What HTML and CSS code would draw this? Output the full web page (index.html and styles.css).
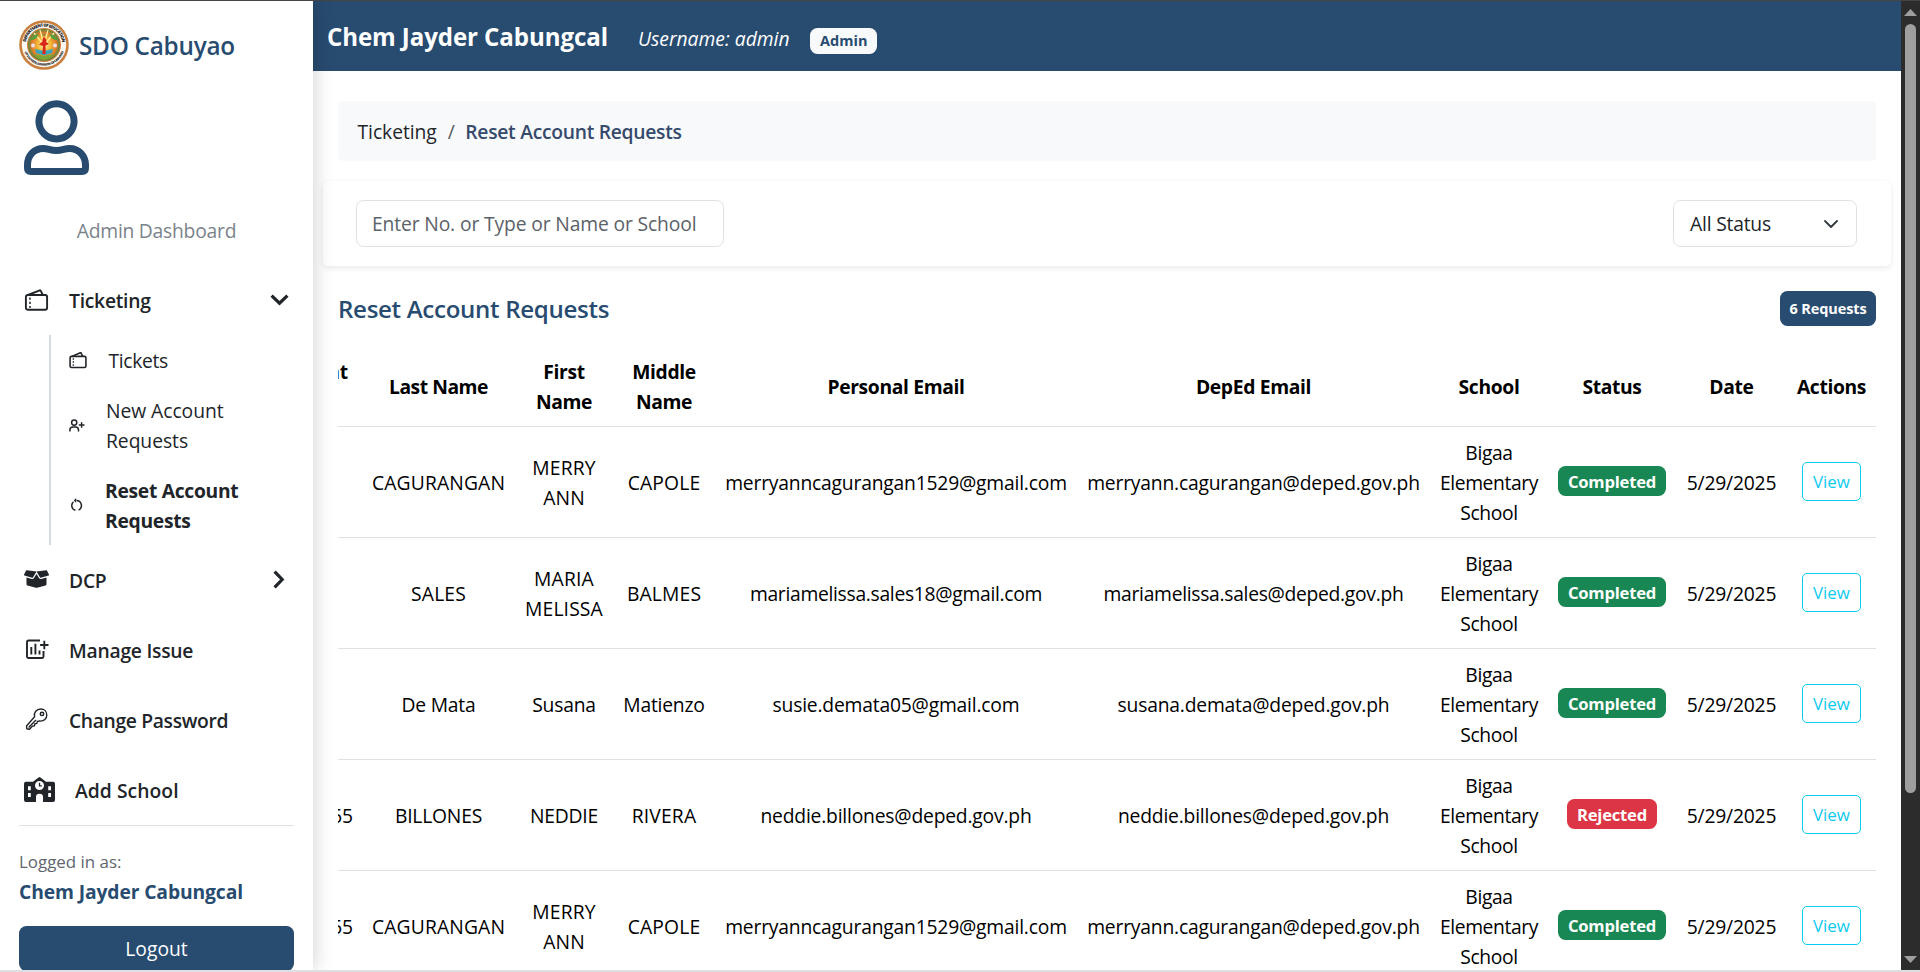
FILE: index.html
```html
<!DOCTYPE html>
<html lang="en">
<head>
<meta charset="utf-8">
<title>SDO Cabuyao</title>
<link rel="stylesheet" href="styles.css">
</head>
<body>
<div class="app">
  <aside class="sidebar">
    <div class="brand">
      <svg class="logo" width="50" height="50" viewBox="0 0 50 50">
        <defs>
          <radialGradient id="glow"><stop offset="0" stop-color="#fff3a0"/><stop offset=".45" stop-color="#f3b334"/><stop offset=".8" stop-color="#e07a2c"/><stop offset="1" stop-color="#4c8a3c"/></radialGradient>
          <path id="arcTop" d="M6.600 25a18.400 18.400 0 0 1 36.800 0"/>
          <path id="arcBottom" d="M4.300 25a20.700 20.700 0 0 0 41.400 0"/>
        </defs>
        <circle cx="25" cy="25" r="24.800" fill="#c9803f"/>
        <circle cx="25" cy="25" r="22.200" fill="#fbf8f2"/>
        <text class="seal"><textPath href="#arcTop" startOffset="3" textLength="52">DEPARTMENT OF EDUCATION</textPath></text>
        <text class="seal seal-small"><textPath href="#arcBottom" startOffset="7" textLength="51">CITY SCHOOLS DIVISION OF CABUYAO</textPath></text>
        <circle cx="25" cy="25" r="17" fill="#c9803f"/>
        <circle cx="25" cy="25" r="15.800" fill="url(#glow)"/>
        <path d="M25 25 15 13M25 25 21 10M25 25 29 10M25 25 35 13" stroke="#fff2a8" stroke-width="1.200"/>
        <path d="M11.500 20c2-4 5-6 8-6-1 4-4 6-8 6zm27 0c-2-4-5-6-8-6 1 4 4 6 8 6z" fill="#55a03c"/>
        <circle cx="14" cy="25.500" r="2" fill="#e8e0f0"/><circle cx="36" cy="25.500" r="2" fill="#e8e0f0"/>
        <path d="M16 29l9 2 9-2-1 4-8 2.500-8-2.500z" fill="#35a8bd"/>
        <path d="M15 34l10 2 10-2-4 4-6 2-6-2z" fill="#7aa832"/>
        <path d="M25 17c2.500 2 3 3.500 2 5l3 2-3.500 1.500 .2 8.500h-3.400L24 26l-4-1.500 3.500-3c-.5-2 .5-3 1.500-4.500z" fill="#d8281c"/>
        <circle cx="25" cy="14.500" r="1.600" fill="#9a8a4a"/>
      </svg>
      <span class="brand-name">SDO Cabuyao</span>
    </div>
    <svg class="avatar" width="66" height="76" viewBox="0 0 66 76" fill="none" stroke="#284b70" stroke-width="7">
      <circle cx="32.500" cy="21.300" r="17.600"/>
      <path d="M7 71.500h51q3.500 0 3.500-3.500v-3c0-9.500-7-16.500-16-16.500-5 0-7 2-13.200 2s-8.200-2-13.200-2c-9 0-15.600 7-15.600 16.500v3q0 3.500 3.500 3.500z"/>
    </svg>
    <p class="role">Admin Dashboard</p>

    <nav class="nav">
      <div class="nav-item">
        <svg class="ticket" width="25" height="22" viewBox="0 0 25 22" fill="none" stroke="#212529" stroke-width="1.900" stroke-linejoin="round"><rect x="1.900" y="6" width="21.200" height="14.700" rx="2"/><path d="M4 6 15.700 1.300q.8-.3 1.100.5L18.800 6"/><path d="M6 8.500v11" stroke-dasharray="2.200 2" stroke-width="1.500"/></svg>
        <span>Ticketing</span>
        <svg class="caret caret-down" width="19" height="12" viewBox="0 0 19 12" fill="none" stroke="#212529" stroke-width="3.200"><path d="M1.600 1.600 9.500 9.200l7.900-7.600"/></svg>
      </div>
      <div class="subnav">
        <div class="subnav-item">
          <svg width="18" height="18" viewBox="0 0 25 24" fill="none" stroke="#212529" stroke-width="2.200" stroke-linejoin="round"><rect x="1.500" y="7" width="22" height="15.500" rx="2"/><path d="M4 7 15.700 2q.8-.3 1.100.5L19 7"/><path d="M6 9.500v12" stroke-dasharray="2.200 2" stroke-width="1.800"/></svg>
          <span class="tight">Tickets</span>
        </div>
        <div class="subnav-item two-line">
          <svg width="16" height="13" viewBox="0 0 16 13" fill="none" stroke="#212529" stroke-width="1.500"><circle cx="5.200" cy="3.600" r="2.600"/><path d="M.9 12.500V11q0-3 3-3h2.600q3 0 3 3v1.500M12.600 3.200v5.600M9.800 6h5.700"/></svg>
          <span>New Account<br>Requests</span>
        </div>
        <div class="subnav-item two-line active">
          <svg width="15" height="14" viewBox="0 0 15 14" fill="none" stroke="#212529" stroke-width="1.500"><path d="M7.600 2.600A5 5 0 0 1 9.600 12.100M6.400 12.300A5 5 0 0 1 4.500 3.700"/><path d="M7.200 0 4.800 2.400l2.400 2.400z" fill="#212529" stroke="none"/></svg>
          <span>Reset Account<br>Requests</span>
        </div>
      </div>
      <div class="nav-item">
        <svg width="25" height="20" viewBox="0 0 640 512" fill="#212529"><path d="M425.700 256c-16.900 0-32.800-9-41.400-23.400L320 126l-64.200 106.600c-8.700 14.500-24.600 23.500-41.500 23.500-4.500 0-9-.6-13.300-1.900L64 215v178c0 14.700 10 27.500 24.200 31l216.200 54.100c10.200 2.500 20.900 2.500 31 0L551.800 424c14.200-3.600 24.200-16.400 24.200-31V215l-137 39.100c-4.300 1.300-8.800 1.900-13.300 1.900zm212.600-112.200L586.800 41c-3.100-6.200-9.800-9.800-16.700-8.900L320 64l91.700 152.100c3.800 6.300 11.400 9.300 18.500 7.300l197.900-56.500c9.900-2.900 14.700-13.900 10.200-23.100zM53.200 41 1.700 143.800c-4.600 9.200.3 20.200 10.100 23l197.900 56.500c7.100 2 14.700-1 18.500-7.300L320 64 69.800 32.100c-6.900-.8-13.500 2.700-16.600 8.900z"/></svg>
        <span>DCP</span>
        <svg class="caret caret-right" width="12" height="19" viewBox="0 0 12 19" fill="none" stroke="#212529" stroke-width="3.200"><path d="M1.600 1.600 9.200 9.500l-7.600 7.900"/></svg>
      </div>
      <div class="nav-item">
        <svg width="25" height="22" viewBox="0 0 25 22" fill="none" stroke="#212529" stroke-width="1.900"><path d="M16 2.500H4.500Q3 2.500 3 4v14.500Q3 20 4.500 20H18q1.500 0 1.500-1.500V13"/><path d="M20.300 2.800v8.400M16.100 7h8.400M7.300 9v7.500M11.400 5.800v10.700M15.500 12.500v4"/></svg>
        <span>Manage Issue</span>
      </div>
      <div class="nav-item">
        <svg width="25" height="24" viewBox="0 0 25 24" fill="none" stroke="#212529" stroke-width="1.400" stroke-linejoin="round"><path d="M10.600 9.800C9.600 5.500 12.500 2 16.800 2c3.500 0 6 2.500 6 6s-2.800 6.600-7.200 6l-2.200.4-.5 2-2 .3-.4 2.100-2 .3-3 3.200-2.700-.6-.3-2.700z"/><path d="M4.600 20.500 12 13"/><circle cx="18" cy="6.900" r="1.700" stroke-width="1.500"/></svg>
        <span class="password">Change Password</span>
      </div>
      <div class="nav-item">
        <svg width="31" height="25" viewBox="0 0 31 25"><path fill="#212529" fill-rule="evenodd" d="M15.500 0q.5 0 1 .4L22 4.700h7q2 0 2 2V23q0 2-2 2H19v-5.200q0-3-3.500-3t-3.500 3V25H2q-2 0-2-2V6.700q0-2 2-2h7L14.500.4q.5-.4 1-.4zM4 9.300v4h2.800v-4zm0 6.700v4h2.800v-4zM24.200 9.300v4H27v-4zm0 6.700v4H27v-4zM15.500 4a4.500 4.500 0 1 0 0 9 4.500 4.500 0 0 0 0-9z"/><path d="M15.500 5.800v3h2.300" fill="none" stroke="#212529" stroke-width="1.300"/></svg>
        <span class="wide">Add School</span>
      </div>
    </nav>

    <div class="account">
      <div class="account-label">Logged in as:</div>
      <div class="account-name">Chem Jayder Cabungcal</div>
      <button class="logout">Logout</button>
    </div>
  </aside>

  <main class="main">
    <header class="topbar">
      <span class="topbar-name">Chem Jayder Cabungcal</span>
      <span class="topbar-user">Username: admin</span>
      <span class="topbar-role">Admin</span>
    </header>
    <div class="content">
      <div class="breadcrumb"><span>Ticketing</span><span class="slash">/</span><span class="current">Reset Account Requests</span></div>
      <div class="filters">
        <input class="search" type="text" placeholder="Enter No. or Type or Name or School">
        <div class="select"><span>All Status</span>
          <svg width="14" height="8" viewBox="0 0 14 8" fill="none" stroke="#343a40" stroke-width="1.800" stroke-linecap="round" stroke-linejoin="round"><path d="M1 1l6 6 6-6"/></svg>
        </div>
      </div>
      <div class="list-head">
        <h1 class="title">Reset Account Requests</h1>
        <span class="count">6 Requests</span>
      </div>
      <div class="table-scroll">
        <table class="table">
          <colgroup><col class="c-acc"><col class="c-last"><col class="c-first"><col class="c-mid"><col class="c-mail"><col class="c-deped"><col class="c-school"><col class="c-status"><col class="c-date"><col class="c-act"></colgroup>
          <thead>
            <tr><th>Account<br>No.</th><th class="snug">Last Name</th><th>First Name</th><th>Middle Name</th><th>Personal Email</th><th>DepEd Email</th><th>School</th><th>Status</th><th>Date</th><th>Actions</th></tr>
          </thead>
          <tbody>
            <tr><td></td><td class="caps">CAGURANGAN</td><td class="caps">MERRY ANN</td><td class="caps">CAPOLE</td><td>merryanncagurangan1529@gmail.com</td><td>merryann.cagurangan@deped.gov.ph</td><td class="school">Bigaa Elementary School</td><td class="control"><span class="badge done">Completed</span></td><td>5/29/2025</td><td class="control"><button class="view">View</button></td></tr>
            <tr><td></td><td class="caps">SALES</td><td class="caps">MARIA MELISSA</td><td class="caps">BALMES</td><td class="mail">mariamelissa.sales18@gmail.com</td><td class="mail">mariamelissa.sales@deped.gov.ph</td><td class="school">Bigaa Elementary School</td><td class="control"><span class="badge done">Completed</span></td><td>5/29/2025</td><td class="control"><button class="view">View</button></td></tr>
            <tr><td></td><td>De Mata</td><td>Susana</td><td>Matienzo</td><td>susie.demata05@gmail.com</td><td>susana.demata@deped.gov.ph</td><td class="school">Bigaa Elementary School</td><td class="control"><span class="badge done">Completed</span></td><td>5/29/2025</td><td class="control"><button class="view">View</button></td></tr>
            <tr><td>00000055</td><td class="billones">BILLONES</td><td class="billones">NEDDIE</td><td class="caps">RIVERA</td><td>neddie.billones@deped.gov.ph</td><td>neddie.billones@deped.gov.ph</td><td class="school">Bigaa Elementary School</td><td class="control"><span class="badge rejected">Rejected</span></td><td>5/29/2025</td><td class="control"><button class="view">View</button></td></tr>
            <tr><td>00000055</td><td class="caps">CAGURANGAN</td><td class="caps">MERRY ANN</td><td class="caps">CAPOLE</td><td>merryanncagurangan1529@gmail.com</td><td>merryann.cagurangan@deped.gov.ph</td><td class="school">Bigaa Elementary School</td><td class="control"><span class="badge done">Completed</span></td><td>5/29/2025</td><td class="control"><button class="view">View</button></td></tr>
          </tbody>
        </table>
      </div>
    </div>
  </main>

  <div class="scrollbar">
    <svg width="13" height="7" viewBox="0 0 13 7"><path d="M0 7 6.500 0 13 7z" fill="#9f9f9f"/></svg>
    <div class="thumb"></div>
    <svg class="down" width="13" height="7" viewBox="0 0 13 7"><path d="M0 0h13L6.500 7z" fill="#9f9f9f"/></svg>
  </div>
</div>
</body>
</html>
```
FILE: styles.css
```css
* { box-sizing: border-box; }
body {
  margin: 0;
  background: #fff;
  color: #212529;
  font: 19.3px/30px "Open Sans", "Noto Sans", sans-serif;
  letter-spacing: -.2px;
}
button, input { font: inherit; letter-spacing: inherit; }
svg { display: block; flex: none; }

.app {
  display: flex;
  height: 972px;
  overflow: hidden;
  border-top: 1px solid #444;
  border-bottom: 2px solid #dedfe2;
}

/* Sidebar */
.sidebar {
  position: relative;
  z-index: 1;
  flex: none;
  width: 313px;
  padding: 19px 19px 0;
  background: #fff;
  box-shadow: 0 0 20px rgba(0, 0, 0, .2);
}
.brand { display: flex; align-items: center; gap: 10px; height: 50px; color: #284b70; }
.brand-name { font-size: 24.3px; font-weight: 550; letter-spacing: -.25px; padding-top: 2px; }
.seal { font-size: 4.300px; font-weight: 800; fill: #222; letter-spacing: 0; }
.seal-small { font-size: 3.200px; }
.avatar { margin: 30px 0 0 4.500px; }
.role { margin: 40px 0 0; text-align: center; color: #7b838a; letter-spacing: -.24px; }

.nav { margin-top: 39px; padding: 0 5px; }
.nav-item { display: flex; align-items: center; gap: 20px; height: 30px; font-weight: 550; letter-spacing: -.25px; }
.nav-item + .nav-item { margin-top: 40px; }
.nav-item svg { margin-bottom: 2px; }
.nav-item .ticket { margin-bottom: 1px; }
.nav-item .caret-down { margin-bottom: 0; }
.nav-item span { margin: 1px 0 -1px; }
.nav-item .password { letter-spacing: -.35px; }
.nav-item .wide { letter-spacing: .05px; }
.caret { margin-left: auto; }
.caret-right { margin-right: 4px; }
.subnav {
  display: flex;
  flex-direction: column;
  gap: 20px;
  margin: 20px 0 20px 25px;
  padding: 10px 0 10px 18px;
  border-left: 2px solid #d3dae2;
}
.subnav-item { display: flex; align-items: center; gap: 21.500px; }
.subnav-item span { margin: 1px 0 -1px; }
.subnav-item.two-line { gap: 21px; }
.subnav-item .tight { letter-spacing: -.35px; }
.subnav-item.two-line { letter-spacing: -.05px; }
.subnav-item.active { font-weight: 700; letter-spacing: -.3px; }

.account { margin-top: 20px; padding-top: 21px; border-top: 1px solid #dee2e6; }
.account-label { font-size: 16.900px; color: #5f666d; letter-spacing: 0; }
.account-name { font-weight: 700; color: #284b70; letter-spacing: -.12px; }
.logout {
  display: block;
  width: 100%;
  height: 45px;
  margin-top: 19px;
  padding: 1px 0 0;
  border: 0;
  border-radius: 7.500px;
  background: #284b70;
  color: #fff;
  letter-spacing: 0;
}

/* Main area */
.main { flex: 1; min-width: 0; overflow: hidden; }
.topbar {
  display: flex;
  align-items: baseline;
  height: 70px;
  padding: 21px 14px 0;
  background: #284b70;
  color: #fff;
}
.topbar-name { font-size: 24.100px; font-weight: 700; letter-spacing: -.1px; margin-right: 30px; }
.topbar-user { font-style: italic; letter-spacing: 0; margin-right: 20.500px; }
.topbar-role {
  padding: 0 10px;
  border-radius: 7.500px;
  background: #f8f9fa;
  color: #284b70;
  font-size: 14.500px;
  font-weight: 700;
  line-height: 26px;
  letter-spacing: 0;
}
.content { padding: 30px 25px 0; }
.breadcrumb {
  display: flex;
  height: 60px;
  padding: 16px 20px 14px 19.500px;
  border-radius: 5px;
  background: #f8f9fb;
}
.breadcrumb span { letter-spacing: -.05px; }
.breadcrumb .slash { margin: 0 10.500px 0 11px; color: #54595e; }
.breadcrumb .current { font-weight: 600; color: #354a6c; letter-spacing: -.28px; }

.filters {
  display: flex;
  justify-content: space-between;
  height: 85px;
  margin: 20px -15px 0;
  padding: 19px 34px 0 33px;
  border-radius: 5px;
  box-shadow: 0 2px 6px rgba(0, 0, 0, .09);
}
.search, .select {
  height: 47px;
  border: 1px solid #dee2e6;
  border-radius: 7.500px;
  background: #fff;
  padding: 0 15px;
}
.search { width: 368px; letter-spacing: -.14px; outline: none; }
.search::placeholder { color: #5c6268; opacity: 1; }
.select { display: flex; align-items: center; justify-content: space-between; width: 184px; padding: 0 18px 0 16px; }

.list-head { display: flex; align-items: center; justify-content: space-between; height: 35px; margin-top: 25px; }
.title { margin: 0; font-size: 24.100px; font-weight: 540; color: #284b70; letter-spacing: -.32px; }
.count {
  padding: 0 9.500px;
  border-radius: 7.500px;
  background: #284b70;
  color: #fff;
  font-size: 14.500px;
  font-weight: 700;
  line-height: 35px;
  letter-spacing: -.12px;
}

/* Requests table, scrolled to its right end */
.table-scroll { display: flex; justify-content: flex-end; margin-top: 20px; overflow: hidden; }
.table { flex: none; width: 1619px; table-layout: fixed; border-collapse: collapse; color: #000; }
.c-acc { width: 105px; }
.c-last { width: 153px; }
.c-first { width: 98px; }
.c-mid { width: 102px; }
.c-mail { width: 362px; }
.c-deped { width: 353px; }
.c-school { width: 118px; }
.c-status { width: 128px; }
.c-date { width: 111px; }
.c-act { width: 89px; }
.table th, .table td { padding: 11px 8px 9px; border-bottom: 1px solid #dee2e6; text-align: center; vertical-align: middle; }
.table .control { padding: 9px 8px 11px; }
.table th { font-weight: 700; letter-spacing: -.35px; }
.table .snug { letter-spacing: -.45px; }
.table .caps { letter-spacing: .15px; }
.table .mail { letter-spacing: -.3px; }
.table .billones { letter-spacing: -.2px; }
.table .school { letter-spacing: -.38px; }
.badge {
  display: inline-block;
  padding: 2px 10px 0;
  border-radius: 7.500px;
  color: #fff;
  font-size: 16.600px;
  font-weight: 700;
  line-height: 28px;
}
.done { background: #198754; }
.rejected { background: #dc3545; }
.view {
  display: inline-block;
  width: 59px;
  height: 39px;
  padding: 1px 0 0;
  border: 1px solid #0dcaf0;
  border-radius: 5px;
  background: #fff;
  color: #0dcaf0;
  font-size: 16.900px;
  letter-spacing: 0;
}

/* Window scrollbar */
.scrollbar {
  display: flex;
  flex-direction: column;
  align-items: center;
  flex: none;
  width: 19px;
  padding: 8px 0 7px;
  background: #2c2c2c;
}
.thumb { width: 11px; height: 769px; margin-top: 8px; border-radius: 5.500px; background: #9f9f9f; }
.down { margin-top: auto; }
```
